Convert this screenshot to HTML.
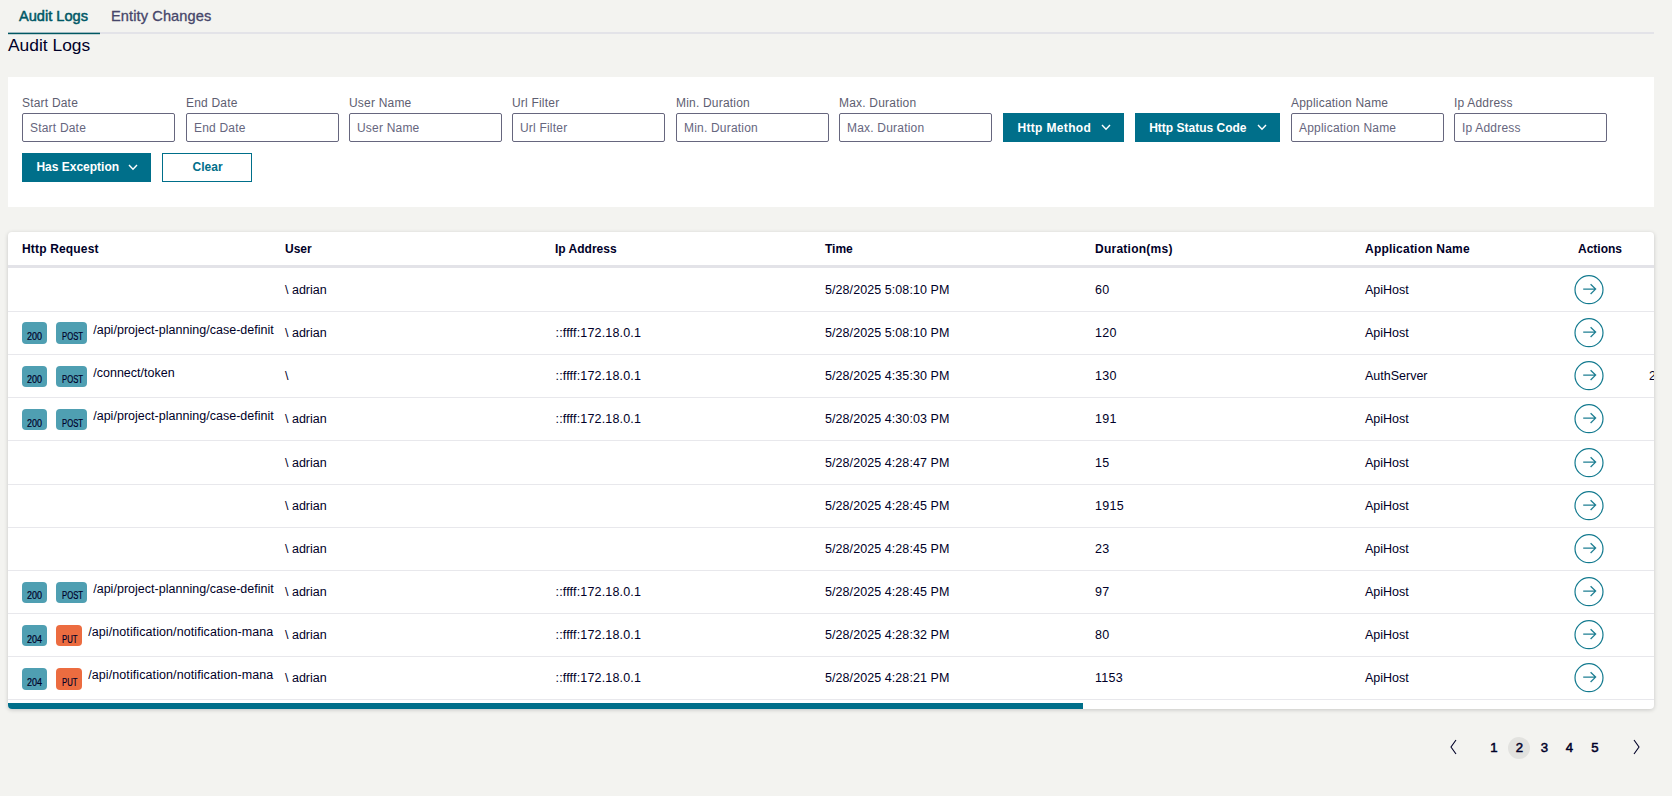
<!DOCTYPE html>
<html><head><meta charset="utf-8"><style>
html,body{margin:0;padding:0;}
body{width:1672px;height:796px;overflow:hidden;background:#f3f3f0;position:relative;font-family:'Liberation Sans', sans-serif;}
.t{position:absolute;white-space:nowrap;-webkit-font-smoothing:antialiased;}
</style></head><body>
<div class="t" style="left:19px;top:9.04px;font-size:14.6px;line-height:14.6px;font-weight:400;color:#005866;-webkit-text-stroke:0.5px #005866">Audit Logs</div>
<div class="t" style="left:111px;top:9.04px;font-size:14.6px;line-height:14.6px;font-weight:400;color:#46466a;-webkit-text-stroke:0.3px #46466a;letter-spacing:0.1px">Entity Changes</div>
<div style="position:absolute;left:8px;top:32px;width:1646px;height:2px;background:#e3e3e8"></div>
<svg style="position:absolute;left:8px;top:30px" width="92" height="6"><rect x="0" y="2.7" width="92" height="1.5" fill="#005862"/></svg>
<div class="t" style="left:8px;top:36.97px;font-size:17.4px;line-height:17.4px;font-weight:400;color:#000028;">Audit Logs</div>
<div style="position:absolute;left:8px;top:77px;width:1646px;height:130px;background:#fff"></div>
<div class="t" style="left:22px;top:96.84px;font-size:12px;line-height:12px;font-weight:400;color:#5e5e71;letter-spacing:0.2px">Start Date</div>
<div style="position:absolute;left:22px;top:113px;width:153px;height:29px;box-sizing:border-box;border:1px solid #66667e;border-radius:2px;background:#fff"></div>
<div class="t" style="left:30px;top:121.84px;font-size:12px;line-height:12px;font-weight:400;color:#66667e;letter-spacing:0.2px">Start Date</div>
<div class="t" style="left:186px;top:96.84px;font-size:12px;line-height:12px;font-weight:400;color:#5e5e71;letter-spacing:0.2px">End Date</div>
<div style="position:absolute;left:186px;top:113px;width:153px;height:29px;box-sizing:border-box;border:1px solid #66667e;border-radius:2px;background:#fff"></div>
<div class="t" style="left:194px;top:121.84px;font-size:12px;line-height:12px;font-weight:400;color:#66667e;letter-spacing:0.2px">End Date</div>
<div class="t" style="left:349px;top:96.84px;font-size:12px;line-height:12px;font-weight:400;color:#5e5e71;letter-spacing:0.2px">User Name</div>
<div style="position:absolute;left:349px;top:113px;width:153px;height:29px;box-sizing:border-box;border:1px solid #66667e;border-radius:2px;background:#fff"></div>
<div class="t" style="left:357px;top:121.84px;font-size:12px;line-height:12px;font-weight:400;color:#66667e;letter-spacing:0.2px">User Name</div>
<div class="t" style="left:512px;top:96.84px;font-size:12px;line-height:12px;font-weight:400;color:#5e5e71;letter-spacing:0.2px">Url Filter</div>
<div style="position:absolute;left:512px;top:113px;width:153px;height:29px;box-sizing:border-box;border:1px solid #66667e;border-radius:2px;background:#fff"></div>
<div class="t" style="left:520px;top:121.84px;font-size:12px;line-height:12px;font-weight:400;color:#66667e;letter-spacing:0.2px">Url Filter</div>
<div class="t" style="left:676px;top:96.84px;font-size:12px;line-height:12px;font-weight:400;color:#5e5e71;letter-spacing:0.2px">Min. Duration</div>
<div style="position:absolute;left:676px;top:113px;width:153px;height:29px;box-sizing:border-box;border:1px solid #66667e;border-radius:2px;background:#fff"></div>
<div class="t" style="left:684px;top:121.84px;font-size:12px;line-height:12px;font-weight:400;color:#66667e;letter-spacing:0.2px">Min. Duration</div>
<div class="t" style="left:839px;top:96.84px;font-size:12px;line-height:12px;font-weight:400;color:#5e5e71;letter-spacing:0.2px">Max. Duration</div>
<div style="position:absolute;left:839px;top:113px;width:153px;height:29px;box-sizing:border-box;border:1px solid #66667e;border-radius:2px;background:#fff"></div>
<div class="t" style="left:847px;top:121.84px;font-size:12px;line-height:12px;font-weight:400;color:#66667e;letter-spacing:0.2px">Max. Duration</div>
<div class="t" style="left:1291px;top:96.84px;font-size:12px;line-height:12px;font-weight:400;color:#5e5e71;letter-spacing:0.2px">Application Name</div>
<div style="position:absolute;left:1291px;top:113px;width:153px;height:29px;box-sizing:border-box;border:1px solid #66667e;border-radius:2px;background:#fff"></div>
<div class="t" style="left:1299px;top:121.84px;font-size:12px;line-height:12px;font-weight:400;color:#66667e;letter-spacing:0.2px">Application Name</div>
<div class="t" style="left:1454px;top:96.84px;font-size:12px;line-height:12px;font-weight:400;color:#5e5e71;letter-spacing:0.2px">Ip Address</div>
<div style="position:absolute;left:1454px;top:113px;width:153px;height:29px;box-sizing:border-box;border:1px solid #66667e;border-radius:2px;background:#fff"></div>
<div class="t" style="left:1462px;top:121.84px;font-size:12px;line-height:12px;font-weight:400;color:#66667e;letter-spacing:0.2px">Ip Address</div>
<div style="position:absolute;left:1003px;top:113px;width:121px;height:29px;background:#006f8a"></div>
<div class="t" style="left:1017.4px;top:121.84px;font-size:12px;line-height:12px;font-weight:700;color:#fff;letter-spacing:0.35px">Http Method</div>
<svg style="position:absolute;left:1100.3px;top:122.85px" width="12.0" height="8.3"><polyline points="2,2 6.0,6.3 10.0,2" fill="none" stroke="#fff" stroke-width="1.4"/></svg>
<div style="position:absolute;left:1135px;top:113px;width:145px;height:29px;background:#006f8a"></div>
<div class="t" style="left:1149.2px;top:121.84px;font-size:12px;line-height:12px;font-weight:700;color:#fff;">Http Status Code</div>
<svg style="position:absolute;left:1256.2px;top:122.85px" width="12.0" height="8.3"><polyline points="2,2 6.0,6.3 10.0,2" fill="none" stroke="#fff" stroke-width="1.4"/></svg>
<div style="position:absolute;left:22px;top:153px;width:129px;height:29px;background:#006f8a"></div>
<div class="t" style="left:36.4px;top:161.34px;font-size:12px;line-height:12px;font-weight:700;color:#fff;">Has Exception</div>
<svg style="position:absolute;left:127.30000000000001px;top:162.85px" width="12.0" height="8.3"><polyline points="2,2 6.0,6.3 10.0,2" fill="none" stroke="#fff" stroke-width="1.4"/></svg>
<div style="position:absolute;left:162px;top:153px;width:90px;height:29px;box-sizing:border-box;border:1px solid #006f8a;background:#fff"></div>
<div class="t" style="left:192.6px;top:161.34px;font-size:12px;line-height:12px;font-weight:700;color:#006f8a;">Clear</div>
<div style="position:absolute;left:8px;top:232px;width:1646px;height:477px;background:#fff;border-radius:4px;box-shadow:0 1px 4px rgba(0,0,0,0.18);overflow:hidden">
</div>
<div class="t" style="left:22px;top:243.34px;font-size:12px;line-height:12px;font-weight:700;color:#000028;letter-spacing:0.17px">Http Request</div>
<div class="t" style="left:285px;top:243.34px;font-size:12px;line-height:12px;font-weight:700;color:#000028;letter-spacing:0px">User</div>
<div class="t" style="left:555px;top:243.34px;font-size:12px;line-height:12px;font-weight:700;color:#000028;letter-spacing:0px">Ip Address</div>
<div class="t" style="left:825px;top:243.34px;font-size:12px;line-height:12px;font-weight:700;color:#000028;letter-spacing:0px">Time</div>
<div class="t" style="left:1095px;top:243.34px;font-size:12px;line-height:12px;font-weight:700;color:#000028;letter-spacing:0.25px">Duration(ms)</div>
<div class="t" style="left:1365px;top:243.34px;font-size:12px;line-height:12px;font-weight:700;color:#000028;letter-spacing:0.22px">Application Name</div>
<div class="t" style="left:1578px;top:243.34px;font-size:12px;line-height:12px;font-weight:700;color:#000028;letter-spacing:0px">Actions</div>
<div style="position:absolute;left:8px;top:265px;width:1646px;height:3px;background:#e3e3e8"></div>
<div style="position:absolute;left:8px;top:311px;width:1646px;height:1px;background:#e8e8ec"></div>
<div class="t" style="left:285px;top:284.42px;font-size:12.5px;line-height:12.5px;font-weight:400;color:#000028;">\ adrian</div>
<div class="t" style="left:825px;top:284.42px;font-size:12.5px;line-height:12.5px;font-weight:400;color:#000028;letter-spacing:0.07px">5/28/2025 5:08:10 PM</div>
<div class="t" style="left:1095px;top:284.42px;font-size:12.5px;line-height:12.5px;font-weight:400;color:#000028;letter-spacing:0.3px">60</div>
<div class="t" style="left:1365px;top:284.42px;font-size:12.5px;line-height:12.5px;font-weight:400;color:#000028;">ApiHost</div>
<svg style="position:absolute;left:1573px;top:274.0px" width="32" height="32"><circle cx="16" cy="15.7" r="14" fill="none" stroke="#137a8f" stroke-width="1.2"/><path d="M10.2 15.1 H22.4 M17.6 10.2 L22.6 15.1 L17.6 20" fill="none" stroke="#1f7f93" stroke-width="1.3"/></svg>
<div style="position:absolute;left:8px;top:354px;width:1646px;height:1px;background:#e8e8ec"></div>
<div style="position:absolute;left:22px;top:322.4px;width:25px;height:21.5px;background:#4f9fb2;border-radius:4px"></div>
<div class="t" style="left:27.2px;top:332.13px;font-size:10px;line-height:10px;font-weight:400;color:#000028;transform:scale(0.9,1);transform-origin:0 8.5px;-webkit-text-stroke:0.2px #000028">200</div>
<div style="position:absolute;left:56px;top:322.4px;width:31px;height:21.5px;background:#4f9fb2;border-radius:4px"></div>
<div class="t" style="left:61.9px;top:332.13px;font-size:10px;line-height:10px;font-weight:400;color:#000028;transform:scale(0.77,1);transform-origin:0 8.5px;-webkit-text-stroke:0.2px #000028">POST</div>
<div style="position:absolute;left:93.2px;top:320.4px;width:181.8px;height:20px;overflow:hidden">
<div class="t" style="left:0;top:3.32px;font-size:12.5px;line-height:12.5px;color:#000028;letter-spacing:0.02px">/api/project-planning/case-definit</div></div>
<div class="t" style="left:285px;top:327.42px;font-size:12.5px;line-height:12.5px;font-weight:400;color:#000028;">\ adrian</div>
<div class="t" style="left:555.5px;top:327.42px;font-size:12.5px;line-height:12.5px;font-weight:400;color:#000028;letter-spacing:0.17px">::ffff:172.18.0.1</div>
<div class="t" style="left:825px;top:327.42px;font-size:12.5px;line-height:12.5px;font-weight:400;color:#000028;letter-spacing:0.07px">5/28/2025 5:08:10 PM</div>
<div class="t" style="left:1095px;top:327.42px;font-size:12.5px;line-height:12.5px;font-weight:400;color:#000028;letter-spacing:0.3px">120</div>
<div class="t" style="left:1365px;top:327.42px;font-size:12.5px;line-height:12.5px;font-weight:400;color:#000028;">ApiHost</div>
<svg style="position:absolute;left:1573px;top:317.0px" width="32" height="32"><circle cx="16" cy="15.7" r="14" fill="none" stroke="#137a8f" stroke-width="1.2"/><path d="M10.2 15.1 H22.4 M17.6 10.2 L22.6 15.1 L17.6 20" fill="none" stroke="#1f7f93" stroke-width="1.3"/></svg>
<div style="position:absolute;left:8px;top:397px;width:1646px;height:1px;background:#e8e8ec"></div>
<div style="position:absolute;left:22px;top:365.6px;width:25px;height:21.5px;background:#4f9fb2;border-radius:4px"></div>
<div class="t" style="left:27.2px;top:375.34px;font-size:10px;line-height:10px;font-weight:400;color:#000028;transform:scale(0.9,1);transform-origin:0 8.5px;-webkit-text-stroke:0.2px #000028">200</div>
<div style="position:absolute;left:56px;top:365.6px;width:31px;height:21.5px;background:#4f9fb2;border-radius:4px"></div>
<div class="t" style="left:61.9px;top:375.34px;font-size:10px;line-height:10px;font-weight:400;color:#000028;transform:scale(0.77,1);transform-origin:0 8.5px;-webkit-text-stroke:0.2px #000028">POST</div>
<div style="position:absolute;left:93.2px;top:363.6px;width:181.8px;height:20px;overflow:hidden">
<div class="t" style="left:0;top:3.32px;font-size:12.5px;line-height:12.5px;color:#000028;letter-spacing:0.02px">/connect/token</div></div>
<div class="t" style="left:285px;top:370.42px;font-size:12.5px;line-height:12.5px;font-weight:400;color:#000028;">\</div>
<div class="t" style="left:555.5px;top:370.42px;font-size:12.5px;line-height:12.5px;font-weight:400;color:#000028;letter-spacing:0.17px">::ffff:172.18.0.1</div>
<div class="t" style="left:825px;top:370.42px;font-size:12.5px;line-height:12.5px;font-weight:400;color:#000028;letter-spacing:0.07px">5/28/2025 4:35:30 PM</div>
<div class="t" style="left:1095px;top:370.42px;font-size:12.5px;line-height:12.5px;font-weight:400;color:#000028;letter-spacing:0.3px">130</div>
<div class="t" style="left:1365px;top:370.42px;font-size:12.5px;line-height:12.5px;font-weight:400;color:#000028;">AuthServer</div>
<svg style="position:absolute;left:1573px;top:360.0px" width="32" height="32"><circle cx="16" cy="15.7" r="14" fill="none" stroke="#137a8f" stroke-width="1.2"/><path d="M10.2 15.1 H22.4 M17.6 10.2 L22.6 15.1 L17.6 20" fill="none" stroke="#1f7f93" stroke-width="1.3"/></svg>
<div style="position:absolute;left:1649px;top:354px;width:5px;height:43px;overflow:hidden"><div class="t" style="left:0;top:16.42px;font-size:12.5px;line-height:12.5px;color:#000028">2</div></div>
<div style="position:absolute;left:8px;top:440px;width:1646px;height:1px;background:#e8e8ec"></div>
<div style="position:absolute;left:22px;top:408.8px;width:25px;height:21.5px;background:#4f9fb2;border-radius:4px"></div>
<div class="t" style="left:27.2px;top:418.54px;font-size:10px;line-height:10px;font-weight:400;color:#000028;transform:scale(0.9,1);transform-origin:0 8.5px;-webkit-text-stroke:0.2px #000028">200</div>
<div style="position:absolute;left:56px;top:408.8px;width:31px;height:21.5px;background:#4f9fb2;border-radius:4px"></div>
<div class="t" style="left:61.9px;top:418.54px;font-size:10px;line-height:10px;font-weight:400;color:#000028;transform:scale(0.77,1);transform-origin:0 8.5px;-webkit-text-stroke:0.2px #000028">POST</div>
<div style="position:absolute;left:93.2px;top:406.8px;width:181.8px;height:20px;overflow:hidden">
<div class="t" style="left:0;top:3.32px;font-size:12.5px;line-height:12.5px;color:#000028;letter-spacing:0.02px">/api/project-planning/case-definit</div></div>
<div class="t" style="left:285px;top:413.42px;font-size:12.5px;line-height:12.5px;font-weight:400;color:#000028;">\ adrian</div>
<div class="t" style="left:555.5px;top:413.42px;font-size:12.5px;line-height:12.5px;font-weight:400;color:#000028;letter-spacing:0.17px">::ffff:172.18.0.1</div>
<div class="t" style="left:825px;top:413.42px;font-size:12.5px;line-height:12.5px;font-weight:400;color:#000028;letter-spacing:0.07px">5/28/2025 4:30:03 PM</div>
<div class="t" style="left:1095px;top:413.42px;font-size:12.5px;line-height:12.5px;font-weight:400;color:#000028;letter-spacing:0.3px">191</div>
<div class="t" style="left:1365px;top:413.42px;font-size:12.5px;line-height:12.5px;font-weight:400;color:#000028;">ApiHost</div>
<svg style="position:absolute;left:1573px;top:403.0px" width="32" height="32"><circle cx="16" cy="15.7" r="14" fill="none" stroke="#137a8f" stroke-width="1.2"/><path d="M10.2 15.1 H22.4 M17.6 10.2 L22.6 15.1 L17.6 20" fill="none" stroke="#1f7f93" stroke-width="1.3"/></svg>
<div style="position:absolute;left:8px;top:484px;width:1646px;height:1px;background:#e8e8ec"></div>
<div class="t" style="left:285px;top:456.92px;font-size:12.5px;line-height:12.5px;font-weight:400;color:#000028;">\ adrian</div>
<div class="t" style="left:825px;top:456.92px;font-size:12.5px;line-height:12.5px;font-weight:400;color:#000028;letter-spacing:0.07px">5/28/2025 4:28:47 PM</div>
<div class="t" style="left:1095px;top:456.92px;font-size:12.5px;line-height:12.5px;font-weight:400;color:#000028;letter-spacing:0.3px">15</div>
<div class="t" style="left:1365px;top:456.92px;font-size:12.5px;line-height:12.5px;font-weight:400;color:#000028;">ApiHost</div>
<svg style="position:absolute;left:1573px;top:446.5px" width="32" height="32"><circle cx="16" cy="15.7" r="14" fill="none" stroke="#137a8f" stroke-width="1.2"/><path d="M10.2 15.1 H22.4 M17.6 10.2 L22.6 15.1 L17.6 20" fill="none" stroke="#1f7f93" stroke-width="1.3"/></svg>
<div style="position:absolute;left:8px;top:527px;width:1646px;height:1px;background:#e8e8ec"></div>
<div class="t" style="left:285px;top:500.42px;font-size:12.5px;line-height:12.5px;font-weight:400;color:#000028;">\ adrian</div>
<div class="t" style="left:825px;top:500.42px;font-size:12.5px;line-height:12.5px;font-weight:400;color:#000028;letter-spacing:0.07px">5/28/2025 4:28:45 PM</div>
<div class="t" style="left:1095px;top:500.42px;font-size:12.5px;line-height:12.5px;font-weight:400;color:#000028;letter-spacing:0.3px">1915</div>
<div class="t" style="left:1365px;top:500.42px;font-size:12.5px;line-height:12.5px;font-weight:400;color:#000028;">ApiHost</div>
<svg style="position:absolute;left:1573px;top:490.0px" width="32" height="32"><circle cx="16" cy="15.7" r="14" fill="none" stroke="#137a8f" stroke-width="1.2"/><path d="M10.2 15.1 H22.4 M17.6 10.2 L22.6 15.1 L17.6 20" fill="none" stroke="#1f7f93" stroke-width="1.3"/></svg>
<div style="position:absolute;left:8px;top:570px;width:1646px;height:1px;background:#e8e8ec"></div>
<div class="t" style="left:285px;top:543.42px;font-size:12.5px;line-height:12.5px;font-weight:400;color:#000028;">\ adrian</div>
<div class="t" style="left:825px;top:543.42px;font-size:12.5px;line-height:12.5px;font-weight:400;color:#000028;letter-spacing:0.07px">5/28/2025 4:28:45 PM</div>
<div class="t" style="left:1095px;top:543.42px;font-size:12.5px;line-height:12.5px;font-weight:400;color:#000028;letter-spacing:0.3px">23</div>
<div class="t" style="left:1365px;top:543.42px;font-size:12.5px;line-height:12.5px;font-weight:400;color:#000028;">ApiHost</div>
<svg style="position:absolute;left:1573px;top:533.0px" width="32" height="32"><circle cx="16" cy="15.7" r="14" fill="none" stroke="#137a8f" stroke-width="1.2"/><path d="M10.2 15.1 H22.4 M17.6 10.2 L22.6 15.1 L17.6 20" fill="none" stroke="#1f7f93" stroke-width="1.3"/></svg>
<div style="position:absolute;left:8px;top:613px;width:1646px;height:1px;background:#e8e8ec"></div>
<div style="position:absolute;left:22px;top:581.6px;width:25px;height:21.5px;background:#4f9fb2;border-radius:4px"></div>
<div class="t" style="left:27.2px;top:591.34px;font-size:10px;line-height:10px;font-weight:400;color:#000028;transform:scale(0.9,1);transform-origin:0 8.5px;-webkit-text-stroke:0.2px #000028">200</div>
<div style="position:absolute;left:56px;top:581.6px;width:31px;height:21.5px;background:#4f9fb2;border-radius:4px"></div>
<div class="t" style="left:61.9px;top:591.34px;font-size:10px;line-height:10px;font-weight:400;color:#000028;transform:scale(0.77,1);transform-origin:0 8.5px;-webkit-text-stroke:0.2px #000028">POST</div>
<div style="position:absolute;left:93.2px;top:579.6px;width:181.8px;height:20px;overflow:hidden">
<div class="t" style="left:0;top:3.32px;font-size:12.5px;line-height:12.5px;color:#000028;letter-spacing:0.02px">/api/project-planning/case-definit</div></div>
<div class="t" style="left:285px;top:586.42px;font-size:12.5px;line-height:12.5px;font-weight:400;color:#000028;">\ adrian</div>
<div class="t" style="left:555.5px;top:586.42px;font-size:12.5px;line-height:12.5px;font-weight:400;color:#000028;letter-spacing:0.17px">::ffff:172.18.0.1</div>
<div class="t" style="left:825px;top:586.42px;font-size:12.5px;line-height:12.5px;font-weight:400;color:#000028;letter-spacing:0.07px">5/28/2025 4:28:45 PM</div>
<div class="t" style="left:1095px;top:586.42px;font-size:12.5px;line-height:12.5px;font-weight:400;color:#000028;letter-spacing:0.3px">97</div>
<div class="t" style="left:1365px;top:586.42px;font-size:12.5px;line-height:12.5px;font-weight:400;color:#000028;">ApiHost</div>
<svg style="position:absolute;left:1573px;top:576.0px" width="32" height="32"><circle cx="16" cy="15.7" r="14" fill="none" stroke="#137a8f" stroke-width="1.2"/><path d="M10.2 15.1 H22.4 M17.6 10.2 L22.6 15.1 L17.6 20" fill="none" stroke="#1f7f93" stroke-width="1.3"/></svg>
<div style="position:absolute;left:8px;top:656px;width:1646px;height:1px;background:#e8e8ec"></div>
<div style="position:absolute;left:22px;top:624.8px;width:25px;height:21.5px;background:#4f9fb2;border-radius:4px"></div>
<div class="t" style="left:27.2px;top:634.53px;font-size:10px;line-height:10px;font-weight:400;color:#000028;transform:scale(0.9,1);transform-origin:0 8.5px;-webkit-text-stroke:0.2px #000028">204</div>
<div style="position:absolute;left:56px;top:624.8px;width:26px;height:21.5px;background:#ec6c40;border-radius:4px"></div>
<div class="t" style="left:61.9px;top:634.53px;font-size:10px;line-height:10px;font-weight:400;color:#000028;transform:scale(0.77,1);transform-origin:0 8.5px;-webkit-text-stroke:0.2px #000028">PUT</div>
<div style="position:absolute;left:88.2px;top:622.8px;width:186.8px;height:20px;overflow:hidden">
<div class="t" style="left:0;top:3.32px;font-size:12.5px;line-height:12.5px;color:#000028;letter-spacing:0.09px">/api/notification/notification-mana</div></div>
<div class="t" style="left:285px;top:629.42px;font-size:12.5px;line-height:12.5px;font-weight:400;color:#000028;">\ adrian</div>
<div class="t" style="left:555.5px;top:629.42px;font-size:12.5px;line-height:12.5px;font-weight:400;color:#000028;letter-spacing:0.17px">::ffff:172.18.0.1</div>
<div class="t" style="left:825px;top:629.42px;font-size:12.5px;line-height:12.5px;font-weight:400;color:#000028;letter-spacing:0.07px">5/28/2025 4:28:32 PM</div>
<div class="t" style="left:1095px;top:629.42px;font-size:12.5px;line-height:12.5px;font-weight:400;color:#000028;letter-spacing:0.3px">80</div>
<div class="t" style="left:1365px;top:629.42px;font-size:12.5px;line-height:12.5px;font-weight:400;color:#000028;">ApiHost</div>
<svg style="position:absolute;left:1573px;top:619.0px" width="32" height="32"><circle cx="16" cy="15.7" r="14" fill="none" stroke="#137a8f" stroke-width="1.2"/><path d="M10.2 15.1 H22.4 M17.6 10.2 L22.6 15.1 L17.6 20" fill="none" stroke="#1f7f93" stroke-width="1.3"/></svg>
<div style="position:absolute;left:8px;top:699px;width:1646px;height:1px;background:#e8e8ec"></div>
<div style="position:absolute;left:22px;top:668.0px;width:25px;height:21.5px;background:#4f9fb2;border-radius:4px"></div>
<div class="t" style="left:27.2px;top:677.74px;font-size:10px;line-height:10px;font-weight:400;color:#000028;transform:scale(0.9,1);transform-origin:0 8.5px;-webkit-text-stroke:0.2px #000028">204</div>
<div style="position:absolute;left:56px;top:668.0px;width:26px;height:21.5px;background:#ec6c40;border-radius:4px"></div>
<div class="t" style="left:61.9px;top:677.74px;font-size:10px;line-height:10px;font-weight:400;color:#000028;transform:scale(0.77,1);transform-origin:0 8.5px;-webkit-text-stroke:0.2px #000028">PUT</div>
<div style="position:absolute;left:88.2px;top:666.0px;width:186.8px;height:20px;overflow:hidden">
<div class="t" style="left:0;top:3.32px;font-size:12.5px;line-height:12.5px;color:#000028;letter-spacing:0.09px">/api/notification/notification-mana</div></div>
<div class="t" style="left:285px;top:672.42px;font-size:12.5px;line-height:12.5px;font-weight:400;color:#000028;">\ adrian</div>
<div class="t" style="left:555.5px;top:672.42px;font-size:12.5px;line-height:12.5px;font-weight:400;color:#000028;letter-spacing:0.17px">::ffff:172.18.0.1</div>
<div class="t" style="left:825px;top:672.42px;font-size:12.5px;line-height:12.5px;font-weight:400;color:#000028;letter-spacing:0.07px">5/28/2025 4:28:21 PM</div>
<div class="t" style="left:1095px;top:672.42px;font-size:12.5px;line-height:12.5px;font-weight:400;color:#000028;letter-spacing:0.3px">1153</div>
<div class="t" style="left:1365px;top:672.42px;font-size:12.5px;line-height:12.5px;font-weight:400;color:#000028;">ApiHost</div>
<svg style="position:absolute;left:1573px;top:662.0px" width="32" height="32"><circle cx="16" cy="15.7" r="14" fill="none" stroke="#137a8f" stroke-width="1.2"/><path d="M10.2 15.1 H22.4 M17.6 10.2 L22.6 15.1 L17.6 20" fill="none" stroke="#1f7f93" stroke-width="1.3"/></svg>
<div style="position:absolute;left:8px;top:703px;width:1075px;height:6px;background:#006f8a;border-bottom-left-radius:4px"></div>
<svg style="position:absolute;left:1448px;top:738px" width="10" height="18"><polyline points="8,2 3,9 8,16" fill="none" stroke="#000028" stroke-width="1.1"/></svg>
<svg style="position:absolute;left:1632px;top:738px" width="10" height="18"><polyline points="2,2 7,9 2,16" fill="none" stroke="#000028" stroke-width="1.1"/></svg>
<div style="position:absolute;left:1508px;top:737px;width:22px;height:22px;background:#e2e2df;border-radius:50%"></div>
<div class="t" style="left:1484px;width:20px;text-align:center;top:741.03px;font-size:13.2px;line-height:13.2px;font-weight:400;-webkit-text-stroke:0.5px #000028;color:#000028">1</div>
<div class="t" style="left:1509.5px;width:20px;text-align:center;top:741.03px;font-size:13.2px;line-height:13.2px;font-weight:400;-webkit-text-stroke:0.5px #000028;color:#000028">2</div>
<div class="t" style="left:1534.5px;width:20px;text-align:center;top:741.03px;font-size:13.2px;line-height:13.2px;font-weight:400;-webkit-text-stroke:0.5px #000028;color:#000028">3</div>
<div class="t" style="left:1559.5px;width:20px;text-align:center;top:741.03px;font-size:13.2px;line-height:13.2px;font-weight:400;-webkit-text-stroke:0.5px #000028;color:#000028">4</div>
<div class="t" style="left:1585px;width:20px;text-align:center;top:741.03px;font-size:13.2px;line-height:13.2px;font-weight:400;-webkit-text-stroke:0.5px #000028;color:#000028">5</div>
</body></html>
